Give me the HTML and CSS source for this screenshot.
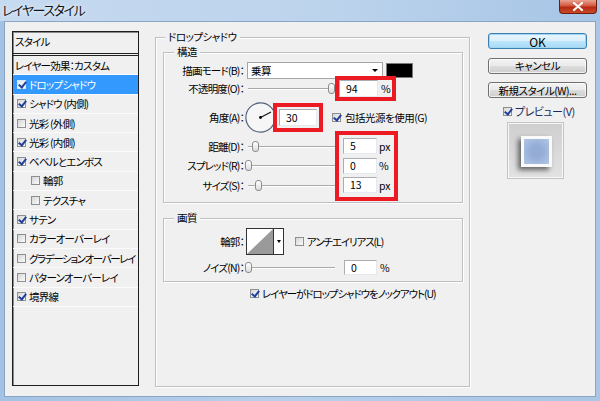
FILE: index.html
```html
<!DOCTYPE html>
<html lang="ja">
<head>
<meta charset="utf-8">
<link rel="stylesheet" href="styles.css">
</head>
<body>
<div class="window">
  <div class="titlebar">
    <span class="title">レイヤースタイル</span>
    <span class="close"><svg width="12" height="9" viewBox="0 0 12 9"><path d="M2 1 L10 8 M10 1 L2 8" stroke="#fff" stroke-width="2.2" stroke-linecap="round"/></svg></span>
  </div>
  <div class="client">
    <div class="stylelist">
      <div class="list-head">スタイル</div>
      <div class="item plain">レイヤー効果：カスタム</div>
      <div class="item sel"><span class="cb on"></span>ドロップシャドウ</div>
      <div class="item"><span class="cb on"></span>シャドウ (内側)</div>
      <div class="item"><span class="cb"></span>光彩 (外側)</div>
      <div class="item"><span class="cb on"></span>光彩 (内側)</div>
      <div class="item"><span class="cb on"></span>ベベルとエンボス</div>
      <div class="item sub"><span class="cb"></span>輪郭</div>
      <div class="item sub"><span class="cb"></span>テクスチャ</div>
      <div class="item"><span class="cb on"></span>サテン</div>
      <div class="item"><span class="cb"></span>カラーオーバーレイ</div>
      <div class="item tight"><span class="cb"></span>グラデーションオーバーレイ</div>
      <div class="item"><span class="cb"></span>パターンオーバーレイ</div>
      <div class="item"><span class="cb on"></span>境界線</div>
    </div>

    <fieldset class="group main">
      <legend>ドロップシャドウ</legend>
      <fieldset class="group sub-group struct">
        <legend>構造</legend>
        <div class="row r-mode">
          <span class="lbl">描画モード(B)：</span>
          <div class="select"><span>乗算</span><span class="sel-arrow"></span></div>
          <span class="swatch"></span>
        </div>
        <div class="row r-opacity">
          <span class="lbl">不透明度(O)：</span>
          <div class="slider"><span class="thumb" style="left:80px"></span></div>
          <span class="hl hl-op"><span class="input w39">94</span><span class="unit">%</span></span>
        </div>
        <div class="row r-angle">
          <span class="lbl">角度(A)：</span>
          <svg class="dial" width="31" height="31" viewBox="0 0 31 31"><circle cx="15.5" cy="15.5" r="14.6" fill="#f6f6f6" stroke="#56627f" stroke-width="1.2"/><line x1="15.5" y1="15.5" x2="26" y2="10" stroke="#111" stroke-width="1.1"/><circle cx="15.5" cy="15.5" r="1.4" fill="#000"/></svg>
          <span class="hl hl-ang"><span class="input w38">30</span></span>
          <span class="cb on global"></span><span class="cb-text">包括光源を使用(G)</span>
        </div>
        <div class="dist-block">
          <div class="dist-left">
            <div class="row r-dist">
              <span class="lbl">距離(D)：</span>
              <div class="slider"><span class="thumb" style="left:4px"></span></div>
            </div>
            <div class="row r-dist">
              <span class="lbl">スプレッド(R)：</span>
              <div class="slider"><span class="thumb" style="left:-3px"></span></div>
            </div>
            <div class="row r-dist">
              <span class="lbl">サイズ(S)：</span>
              <div class="slider"><span class="thumb" style="left:7px"></span></div>
            </div>
          </div>
          <div class="hl3">
            <div class="vrow"><span class="input w34">5</span><span class="unit">px</span></div>
            <div class="vrow"><span class="input w34">0</span><span class="unit">%</span></div>
            <div class="vrow"><span class="input w34">13</span><span class="unit">px</span></div>
          </div>
        </div>
      </fieldset>

      <fieldset class="group sub-group quality">
        <legend>画質</legend>
        <div class="row r-contour">
          <span class="lbl">輪郭：</span>
          <div class="contour">
            <svg width="26" height="25" viewBox="0 0 26 25"><rect width="26" height="25" fill="#fff"/><polygon points="0,25 26,0 26,25" fill="#9a9a9a"/></svg>
            <span class="c-arrow"></span>
          </div>
          <span class="cb aa"></span><span class="cb-text kana">アンチエイリアス(L)</span>
        </div>
        <div class="row r-noise">
          <span class="lbl">ノイズ(N)：</span>
          <div class="slider"><span class="thumb" style="left:-3px"></span></div>
          <span class="input w33 noise-in">0</span><span class="unit">%</span>
        </div>
      </fieldset>

      <div class="row r-knock">
        <span class="cb on"></span><span class="cb-text kana">レイヤーがドロップシャドウをノックアウト(U)</span>
      </div>
    </fieldset>

    <div class="side">
      <div class="btn default">OK</div>
      <div class="btn">キャンセル</div>
      <div class="btn">新規スタイル(W)...</div>
      <div class="preview-row"><span class="cb on"></span><span class="pv-text">プレビュー(V)</span></div>
      <div class="preview"><div class="pv-square"></div></div>
    </div>
  </div>
</div>
</body>
</html>
```
FILE: styles.css
```css
* { box-sizing: border-box; }
html, body { margin: 0; padding: 0; }
body {
  width: 600px;
  height: 401px;
  overflow: hidden;
  font-family: "Noto Sans CJK JP", "Noto Sans", sans-serif;
  font-size: 10.5px;
  letter-spacing: -0.5px;
  color: #000;
  font-feature-settings: "palt";
}
.window {
  width: 600px;
  height: 401px;
  display: flex;
  flex-direction: column;
  background: linear-gradient(90deg, #a4c2e4, #b8d0eb 45%, #a9c6e7);
}
.titlebar {
  height: 21px;
  display: flex;
  justify-content: space-between;
  align-items: flex-start;
  background: linear-gradient(90deg, #c6daf0, #bcd3ec 55%, #a7c5e6);
}
.title {
  font-size: 13px;
  line-height: 17px;
  padding: 0.5px 0 0 2px;
  letter-spacing: -1.4px;
  color: #151515;
  text-shadow: 0 0 5px #e8f2fc, 0 0 2px #e8f2fc;
}
.close {
  width: 38px;
  height: 14px;
  margin-right: 3px;
  display: flex;
  align-items: center;
  justify-content: center;
  background: linear-gradient(180deg, #e9a392, #d2563c 45%, #b52a10 55%, #c94a2a);
  border: 1px solid #6c1d10;
  border-top: none;
  border-radius: 0 0 4px 4px;
}
.client {
  flex: 1;
  margin: 0 4px 4px;
  background: #f0f0f0;
  border: 1px solid #8aa5c4;
  display: flex;
  align-items: flex-start;
  padding-left: 7px;
}

/* style list */
.stylelist {
  width: 127px;
  height: 355px;
  margin-top: 9px;
  border: 1px solid #1e1e1e;
  box-shadow: inset 1px 1px 0 #8a8a8a;
  background: #f0f0f0;
  letter-spacing: -0.8px;
}
.list-head {
  height: 24px;
  line-height: 20px;
  padding-left: 2px;
  border-bottom: 3px double #222;
}
.item {
  height: 19.3px;
  display: flex;
  align-items: center;
  padding-left: 4px;
  border-bottom: 1px solid #fbfbfb;
  white-space: nowrap;
  overflow: hidden;
}
.item.plain { padding-left: 2px; }
.item.sub { padding-left: 18px; }
.item.sel { background: #3399ff; color: #fff; }
.item.tight { letter-spacing: -1.4px; }

.cb {
  position: relative;
  flex: none;
  width: 9px;
  height: 9px;
  margin-right: 3px;
  border: 1px solid #8e8f8f;
  background: linear-gradient(135deg, #d6d6d6, #fbfbfb);
}
.cb.on::after {
  content: "";
  position: absolute;
  left: 2px;
  top: -1px;
  width: 3px;
  height: 6px;
  border: solid #22409a;
  border-width: 0 2px 2px 0;
  transform: rotate(38deg);
}
.item.sel .cb { border-color: #d9e6f5; background: linear-gradient(135deg, #dfe6ee, #ffffff); }

/* group boxes */
fieldset.group {
  margin: 0;
  border: 1px solid #bfbfbf;
  box-shadow: inset 1px 1px 0 #fff, 1px 1px 0 #fff;
  min-width: 0;
}
fieldset.group > legend {
  padding: 0 3px;
  line-height: 14px;
  background: #f0f0f0;
}
.main {
  width: 315px;
  height: 357px;
  margin-left: 16px !important;
  margin-top: 8px !important;
  padding: 0 6px 0 7px;
}
.main > legend { margin-left: 2px; }
.sub-group { width: 300px; padding: 0 0 5px 0; }
.sub-group > legend { margin-left: 10px; }
.struct { margin-top: 1px !important; }
.quality { margin-top: 8.5px !important; padding-bottom: 5.5px; }

.row { display: flex; align-items: center; white-space: nowrap; }
.lbl { width: 80px; flex: none; text-align: right; letter-spacing: -0.8px; }
.kana { letter-spacing: -1.1px; }

.r-mode { height: 17px; margin-top: 3px; }
.select {
  width: 136px;
  height: 17px;
  margin-left: 3px;
  background: #fff;
  border: 1px solid #a5a5a5;
  display: flex;
  align-items: center;
  justify-content: space-between;
  padding: 0 4px 0 3px;
}
.sel-arrow {
  width: 0; height: 0;
  border-left: 3px solid transparent;
  border-right: 3px solid transparent;
  border-top: 3px solid #000;
}
.swatch {
  width: 27px;
  height: 15px;
  margin-left: 3px;
  background: #000;
  border: 1px solid #7a7a7a;
}

.r-opacity { height: 17px; margin-top: 1px; }
.slider {
  position: relative;
  width: 87px;
  height: 11px;
  margin-left: 4px;
  flex: none;
}
.slider::before {
  content: "";
  position: absolute;
  left: 0; right: 0; top: 5px;
  height: 1px;
  background: #a9a9a9;
  box-shadow: 0 1px 0 #fff;
}
.thumb {
  position: absolute;
  top: 0;
  width: 7px;
  height: 11px;
  border: 1px solid #8c8c8c;
  border-radius: 3px;
  background: linear-gradient(180deg, #ffffff, #dcdcdc);
}
.input {
  height: 17px;
  background: #fff;
  border: 1px solid #abadb3;
  border-color: #abadb3 #e3e9ef #e3e9ef #abadb3;
  padding-left: 6px;
  line-height: 15px;
  display: block;
  letter-spacing: 0;
}
.w39 { width: 39px; }
.w38 { width: 38px; }
.w34 { width: 34px; height: 16px; line-height: 14px; }
.w33 { width: 33px; height: 15px; line-height: 13px; }
.unit { margin-left: 3px; letter-spacing: 0; }
.hl {
  display: flex;
  align-items: center;
  outline: 4px solid #ec1b23;
}
.hl-op { margin-left: 4px; padding-right: 1px; }
.r-angle { height: 31px; margin-top: 5px; }
.dial { margin-left: 1px; flex: none; }
.hl-ang { margin-left: 3px; outline-offset: 2px; }
.cb.global { margin-left: 15px; margin-right: 4px; }

.dist-block { display: flex; margin-top: 1.5px; }
.dist-left {
  display: flex;
  flex-direction: column;
  gap: 3.5px;
  padding-top: 3.5px;
}
.r-dist { height: 16px; }
.hl3 {
  margin-left: 4px;
  width: 55px;
  padding: 3.5px 0 3.5px 4px;
  display: flex;
  flex-direction: column;
  gap: 3.5px;
  outline: 4px solid #ec1b23;
}
.vrow { display: flex; align-items: center; height: 16px; }
.vrow .unit { margin-left: 2px; }

.r-contour { height: 27px; margin-top: 3px; }
.contour {
  margin-left: 2px;
  width: 38px;
  height: 27px;
  border: 1px solid #333;
  display: flex;
  background: #fff;
}
.c-arrow {
  width: 10px;
  border-left: 1px solid #333;
  display: flex;
  align-items: center;
  justify-content: center;
}
.c-arrow::before {
  content: "";
  border-left: 2.5px solid transparent;
  border-right: 2.5px solid transparent;
  border-top: 3px solid #000;
}
.cb.aa { margin-left: 11px; margin-right: 3px; }
.r-noise { height: 16px; margin-top: 4px; }
.noise-in { margin-left: 9px; }
.r-knock { height: 14px; margin-top: 4.5px; padding-left: 87px; }
.r-knock .cb { margin-right: 3px; }

/* right side */
.side {
  width: 99px;
  margin-left: 18px;
  margin-top: 11px;
  display: flex;
  flex-direction: column;
}
.btn {
  height: 16px;
  border: 1px solid #707070;
  border-radius: 3px;
  background: linear-gradient(180deg, #f2f2f2 0%, #ebebeb 50%, #dddddd 50%, #cfcfcf 100%);
  display: flex;
  align-items: center;
  justify-content: center;
  margin-bottom: 8.5px;
  box-shadow: inset 0 0 0 1px rgba(255,255,255,0.7);
}
.btn.default {
  border-color: #3c7fb1;
  background: linear-gradient(180deg, #eaf6fd 0%, #d9f0fc 50%, #bee6fd 50%, #a7d9f5 100%);
  box-shadow: inset 0 0 0 1px #9fd6f2;
  font-size: 12px;
  letter-spacing: 0;
}
.preview-row {
  height: 14px;
  margin-top: -2.5px;
  display: flex;
  align-items: center;
  padding-left: 15px;
}
.pv-text { color: #1d2a5c; font-size: 11px; }
.preview {
  width: 55px;
  height: 55px;
  margin: 5px 0 0 20px;
  border: 1px solid #f7f7f7;
  outline: 1px solid #c4c4c4;
  background: linear-gradient(180deg, #cfcfcf, #e2e2e2);
  display: flex;
  align-items: center;
  justify-content: center;
}
.pv-square {
  width: 31px;
  height: 31px;
  margin: 2px 0 0 2px;
  border: 3px solid #fafafa;
  background: radial-gradient(circle, #93acd6 30%, #b3c7e6 100%);
  box-shadow: -3px 3px 5px rgba(0,0,0,0.55);
}
```
